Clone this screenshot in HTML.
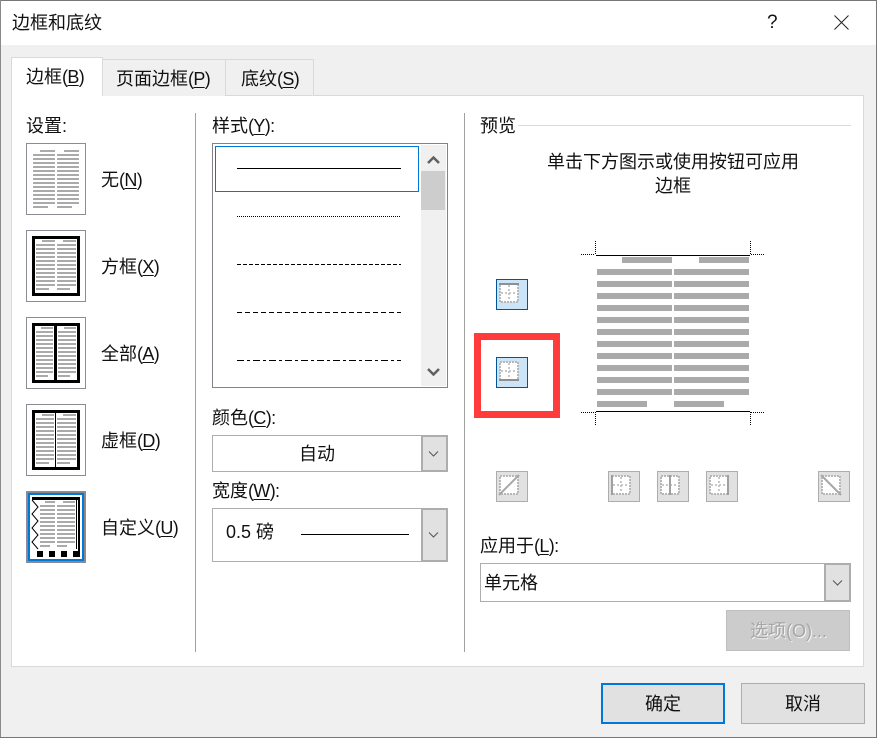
<!DOCTYPE html>
<html><head><meta charset="utf-8">
<style>
html,body{margin:0;padding:0;background:#f0f0f0}
body{position:relative;width:877px;height:738px;overflow:hidden;font-family:"Liberation Sans","Noto Sans CJK SC",sans-serif;font-size:18px;color:#111}
.t{position:absolute;white-space:nowrap;line-height:24px;height:24px}
.l{letter-spacing:-.65px}
svg{position:absolute;left:0;top:0}
u{text-underline-offset:2px;text-decoration-thickness:1px}
</style></head><body>
<svg width="877" height="738" viewBox="0 0 877 738" shape-rendering="crispEdges" fill="none">
<defs>
<g id="dotcross">
<rect x="1" y="1" width="18" height="18" fill="#fff" stroke="#b8b8b8" stroke-width="2" stroke-dasharray="2 1"/>
<path d="M10 2V18M2 10H18" stroke="#c8c8c8" stroke-width="2" stroke-dasharray="2 2"/>
</g>
</defs>
<rect x="0" y="0" width="877" height="45" fill="#fff"/>
<rect x="0" y="0" width="877" height="1" fill="#777"/>
<rect x="0" y="0" width="1" height="738" fill="#8a8a8a"/>
<rect x="876" y="0" width="1" height="738" fill="#777"/>
<rect x="0" y="737" width="877" height="1" fill="#777"/>
<!-- panel -->
<rect x="11.5" y="95.5" width="852" height="571" fill="#fff" stroke="#d9d9d9"/>
<!-- tabs -->
<path d="M102.5 96V59.5H225.5V96M225.5 59.5H313.5V96" fill="#f0f0f0" stroke="#d9d9d9"/>
<path d="M11.5 96V57.5H102.5V96" fill="#fff" stroke="#d9d9d9"/>
<rect x="12" y="94" width="90" height="3" fill="#fff"/>
<!-- dividers -->
<path d="M195.5 113V652M464.5 113V652" stroke="#a0a0a0"/>
<path d="M518 125.5H851" stroke="#d9d9d9"/>
<!-- setting thumbs -->
<g stroke="#8c8c94" fill="#fff">
<rect x="26.5" y="143.5" width="59" height="71"/>
<rect x="26.5" y="230.5" width="59" height="71"/>
<rect x="26.5" y="317.5" width="59" height="71"/>
<rect x="26.5" y="404.5" width="59" height="71"/>
<rect x="26.5" y="491.5" width="59" height="71"/>
</g>
<!-- none -->
<g stroke="#aaa" stroke-width="2">
<path d="M40 151H55M64 151H79M33 207H48M57 207H72"/>
<path d="M33 155H55M33 159H55M33 163H55M33 167H55M33 171H55M33 175H55M33 179H55M33 183H55M33 187H55M33 191H55M33 195H55M33 199H55M33 203H55"/>
<path d="M57 155H79M57 159H79M57 163H79M57 167H79M57 171H79M57 175H79M57 179H79M57 183H79M57 187H79M57 191H79M57 195H79M57 199H79M57 203H79"/>
</g>
<!-- box -->
<rect x="33.5" y="237.5" width="45" height="57" stroke="#000" stroke-width="3"/>
<g stroke="#aaa" stroke-width="2">
<path d="M42 241H55M63 241H76M36 289H49M57 289H70"/>
<path d="M36 245H55M36 249H55M36 253H55M36 257H55M36 261H55M36 265H55M36 269H55M36 273H55M36 277H55M36 281H55M36 285H55"/>
<path d="M57 245H76M57 249H76M57 253H76M57 257H76M57 261H76M57 265H76M57 269H76M57 273H76M57 277H76M57 281H76M57 285H76"/>
</g>
<!-- all -->
<rect x="33.5" y="324.5" width="45" height="57" stroke="#000" stroke-width="3"/>
<rect x="54" y="324" width="3" height="58" fill="#000"/>
<g stroke="#aaa" stroke-width="2">
<path d="M41 328H53M64 328H76M36 376H48M58 376H70"/>
<path d="M36 332H53M36 336H53M36 340H53M36 344H53M36 348H53M36 352H53M36 356H53M36 360H53M36 364H53M36 368H53M36 372H53"/>
<path d="M58 332H76M58 336H76M58 340H76M58 344H76M58 348H76M58 352H76M58 356H76M58 360H76M58 364H76M58 368H76M58 372H76"/>
</g>
<!-- grid dashed -->
<rect x="33.5" y="411.5" width="45" height="57" stroke="#000" stroke-width="3"/>
<rect x="55" y="412" width="1" height="56" fill="#000"/>
<g stroke="#aaa" stroke-width="2">
<path d="M42 415H54M63 415H76M36 463H49M57 463H70"/>
<path d="M36 419H54M36 423H54M36 427H54M36 431H54M36 435H54M36 439H54M36 443H54M36 447H54M36 451H54M36 455H54M36 459H54"/>
<path d="M57 419H76M57 423H76M57 427H76M57 431H76M57 435H76M57 439H76M57 443H76M57 447H76M57 451H76M57 455H76M57 459H76"/>
</g>
<!-- custom -->
<rect x="27.5" y="492.5" width="57" height="69" stroke="#111" stroke-dasharray="1 1"/>
<rect x="29" y="494" width="54" height="66" stroke="#0078d7" stroke-width="2"/>
<rect x="32" y="497" width="48" height="3" fill="#000"/>
<path d="M76.500 500V549" stroke="#000"/>
<rect x="78" y="500" width="2" height="53" fill="#000"/>
<rect x="37" y="551" width="6" height="6" fill="#000"/>
<rect x="49" y="551" width="6" height="6" fill="#000"/>
<rect x="61" y="551" width="6" height="6" fill="#000"/>
<rect x="73" y="551" width="7" height="6" fill="#000"/>
<g stroke="#aaa" stroke-width="2">
<path d="M45 502H55M63 502H75M40 546H50M57 546H67"/>
<path d="M40 506H55M40 510H55M40 514H55M40 518H55M40 522H55M40 526H55M40 530H55M40 534H55M40 538H55M40 542H55"/>
<path d="M57 506H75M57 510H75M57 514H75M57 518H75M57 522H75M57 526H75M57 530H75M57 534H75M57 538H75M57 542H75"/>
</g>
<path d="M32 500L38 507L32 514L38 521L32 528L38 535L32 542L38 549" stroke="#000" shape-rendering="auto"/>
<!-- style list -->
<rect x="212.5" y="143.5" width="235" height="244" fill="#fff" stroke="#82838a"/>
<rect x="215.5" y="146.5" width="203" height="45" stroke="#0078d7"/>
<rect x="421" y="145" width="25" height="241" fill="#f0f0f0"/>
<rect x="421" y="171" width="24" height="39" fill="#cdcdcd"/>
<path d="M428 163L433.500 157.500L439 163" stroke="#606060" stroke-width="2.500" shape-rendering="auto"/>
<path d="M428 369L433.500 374.500L439 369" stroke="#606060" stroke-width="2.500" shape-rendering="auto"/>
<g stroke="#000">
<path d="M237 168.500H401"/>
<path d="M237 216.500H400" stroke-dasharray="1 1"/>
<path d="M237 264.500H401" stroke-dasharray="4 2"/>
<path d="M237 312.500H401" stroke-dasharray="5 3"/>
<path d="M237 360.500H401" stroke-dasharray="7 3 3 3"/>
</g>
<!-- colour combo -->
<rect x="212.500" y="435.500" width="235" height="36" fill="#fff" stroke="#adadad"/>
<rect x="422" y="436" width="25" height="35" fill="#e1e1e1" stroke="#adadad" stroke-width="2"/>
<path d="M429 451.500L433.500 456L438 451.500" stroke="#555" shape-rendering="auto"/>
<!-- width combo -->
<rect x="212.500" y="508.500" width="235" height="53" fill="#fff" stroke="#adadad"/>
<rect x="422" y="509" width="25" height="52" fill="#e1e1e1" stroke="#adadad" stroke-width="2"/>
<path d="M429 532.500L433.500 537L438 532.500" stroke="#555" shape-rendering="auto"/>
<path d="M301 534.500H409" stroke="#000"/>
<!-- side buttons -->
<rect x="496.500" y="279.500" width="31" height="30" fill="#cce4f7" stroke="#005499"/>
<use href="#dotcross" x="499" y="283"/>
<rect x="499" y="283" width="20" height="2" fill="#8f8f8f"/>
<rect x="496.500" y="357.500" width="31" height="30" fill="#cce4f7" stroke="#005499"/>
<use href="#dotcross" x="499" y="361"/>
<rect x="499" y="379" width="20" height="2" fill="#8f8f8f"/>
<!-- red -->
<rect x="477.500" y="336.500" width="79" height="78" stroke="#ff3b3b" stroke-width="7"/>
<!-- bottom buttons -->
<g fill="#e1e1e1" stroke="#adadad">
<rect x="496.500" y="471.500" width="31" height="30"/>
<rect x="608.500" y="471.500" width="31" height="30"/>
<rect x="657.500" y="471.500" width="31" height="30"/>
<rect x="706.500" y="471.500" width="31" height="30"/>
<rect x="818.500" y="471.500" width="31" height="30"/>
</g>
<rect x="500" y="476" width="18" height="18" fill="#fff" stroke="#b8b8b8" stroke-width="2" stroke-dasharray="2 1"/>
<path d="M499 495L519 475" stroke="#a8a8a8" stroke-width="2" shape-rendering="auto"/>
<use href="#dotcross" x="611" y="475"/>
<rect x="611" y="475" width="2" height="20" fill="#a0a0a0"/>
<use href="#dotcross" x="660" y="475"/>
<rect x="669" y="475" width="2" height="20" fill="#a0a0a0"/>
<use href="#dotcross" x="709" y="475"/>
<rect x="727" y="475" width="2" height="20" fill="#a0a0a0"/>
<rect x="822" y="476" width="18" height="18" fill="#fff" stroke="#b8b8b8" stroke-width="2" stroke-dasharray="2 1"/>
<path d="M821 475L841 495" stroke="#a8a8a8" stroke-width="2" shape-rendering="auto"/>
<!-- preview -->
<rect x="596" y="255" width="154" height="1" fill="#000"/>
<rect x="596" y="411" width="154" height="1" fill="#000"/>
<g stroke="#000" stroke-dasharray="1 1">
<path d="M581 254.500H595M751 254.500H765M581 412.500H595M751 412.500H765"/>
<path d="M595.500 241V255M750.500 241V255M595.500 412V426M750.500 412V426"/>
</g>
<g fill="#aaa">
<rect x="622" y="257" width="50" height="6"/><rect x="699" y="257" width="50" height="6"/>
<rect x="597" y="269" width="75" height="6"/><rect x="674" y="269" width="75" height="6"/>
<rect x="597" y="281" width="75" height="6"/><rect x="674" y="281" width="75" height="6"/>
<rect x="597" y="293" width="75" height="6"/><rect x="674" y="293" width="75" height="6"/>
<rect x="597" y="305" width="75" height="6"/><rect x="674" y="305" width="75" height="6"/>
<rect x="597" y="317" width="75" height="6"/><rect x="674" y="317" width="75" height="6"/>
<rect x="597" y="329" width="75" height="6"/><rect x="674" y="329" width="75" height="6"/>
<rect x="597" y="341" width="75" height="6"/><rect x="674" y="341" width="75" height="6"/>
<rect x="597" y="353" width="75" height="6"/><rect x="674" y="353" width="75" height="6"/>
<rect x="597" y="365" width="75" height="6"/><rect x="674" y="365" width="75" height="6"/>
<rect x="597" y="377" width="75" height="6"/><rect x="674" y="377" width="75" height="6"/>
<rect x="597" y="389" width="75" height="6"/><rect x="674" y="389" width="75" height="6"/>
<rect x="597" y="401" width="50" height="6"/><rect x="674" y="401" width="50" height="6"/>
</g>
<!-- apply combo -->
<rect x="480.500" y="563.500" width="370" height="38" fill="#fff" stroke="#adadad"/>
<rect x="825" y="564" width="25" height="37" fill="#e1e1e1" stroke="#adadad" stroke-width="2"/>
<path d="M833 580.500L837.500 585L842 580.500" stroke="#555" shape-rendering="auto"/>
<!-- buttons -->
<rect x="726.500" y="610.500" width="123" height="40" fill="#ccc" stroke="#bfbfbf"/>
<rect x="602" y="684" width="122" height="39" fill="#e1e1e1" stroke="#0078d7" stroke-width="2"/>
<rect x="741.500" y="683.500" width="123" height="40" fill="#e1e1e1" stroke="#adadad"/>
<!-- close -->
<path d="M834.500 15.500L848.500 29.500M848.500 15.500L834.500 29.500" stroke="#222" shape-rendering="auto"/>
</svg>
<div class="t" style="left:12px;top:11px">边框和底纹</div>
<div class="t" style="left:767px;top:11px;font-size:19px">?</div>
<div class="t" style="left:26px;top:65px">边框<span class="l">(<u>B</u>)</span></div>
<div class="t" style="left:116px;top:67px">页面边框<span class="l">(<u>P</u>)</span></div>
<div class="t" style="left:241px;top:67px">底纹<span class="l">(<u>S</u>)</span></div>
<div class="t" style="left:26px;top:114px">设置<span class="l">:</span></div>
<div class="t" style="left:212px;top:114px">样式<span class="l">(<u>Y</u>):</span></div>
<div class="t" style="left:480px;top:114px">预览</div>
<div class="t" style="left:101px;top:168px">无<span class="l">(<u>N</u>)</span></div>
<div class="t" style="left:101px;top:255px">方框<span class="l">(<u>X</u>)</span></div>
<div class="t" style="left:101px;top:342px">全部<span class="l">(<u>A</u>)</span></div>
<div class="t" style="left:101px;top:429px">虚框<span class="l">(<u>D</u>)</span></div>
<div class="t" style="left:101px;top:516px">自定义<span class="l">(<u>U</u>)</span></div>
<div class="t" style="left:212px;top:406px">颜色<span class="l">(<u>C</u>):</span></div>
<div class="t" style="left:212px;top:479px">宽度<span class="l">(<u>W</u>):</span></div>
<div class="t" style="left:299px;top:442px">自动</div>
<div class="t" style="left:226px;top:520px">0.5 磅</div>
<div class="t" style="left:547px;top:150px">单击下方图示或使用按钮可应用</div>
<div class="t" style="left:655px;top:174px">边框</div>
<div class="t" style="left:480px;top:534px">应用于<span class="l">(<u>L</u>):</span></div>
<div class="t" style="left:484px;top:571px">单元格</div>
<div class="t" style="left:750px;top:619px;color:#a6a6a6;text-shadow:1px 1px 0 #f4f4f4">选项(O)...</div>
<div class="t" style="left:645px;top:692px">确定</div>
<div class="t" style="left:785px;top:692px">取消</div>
</body></html>
